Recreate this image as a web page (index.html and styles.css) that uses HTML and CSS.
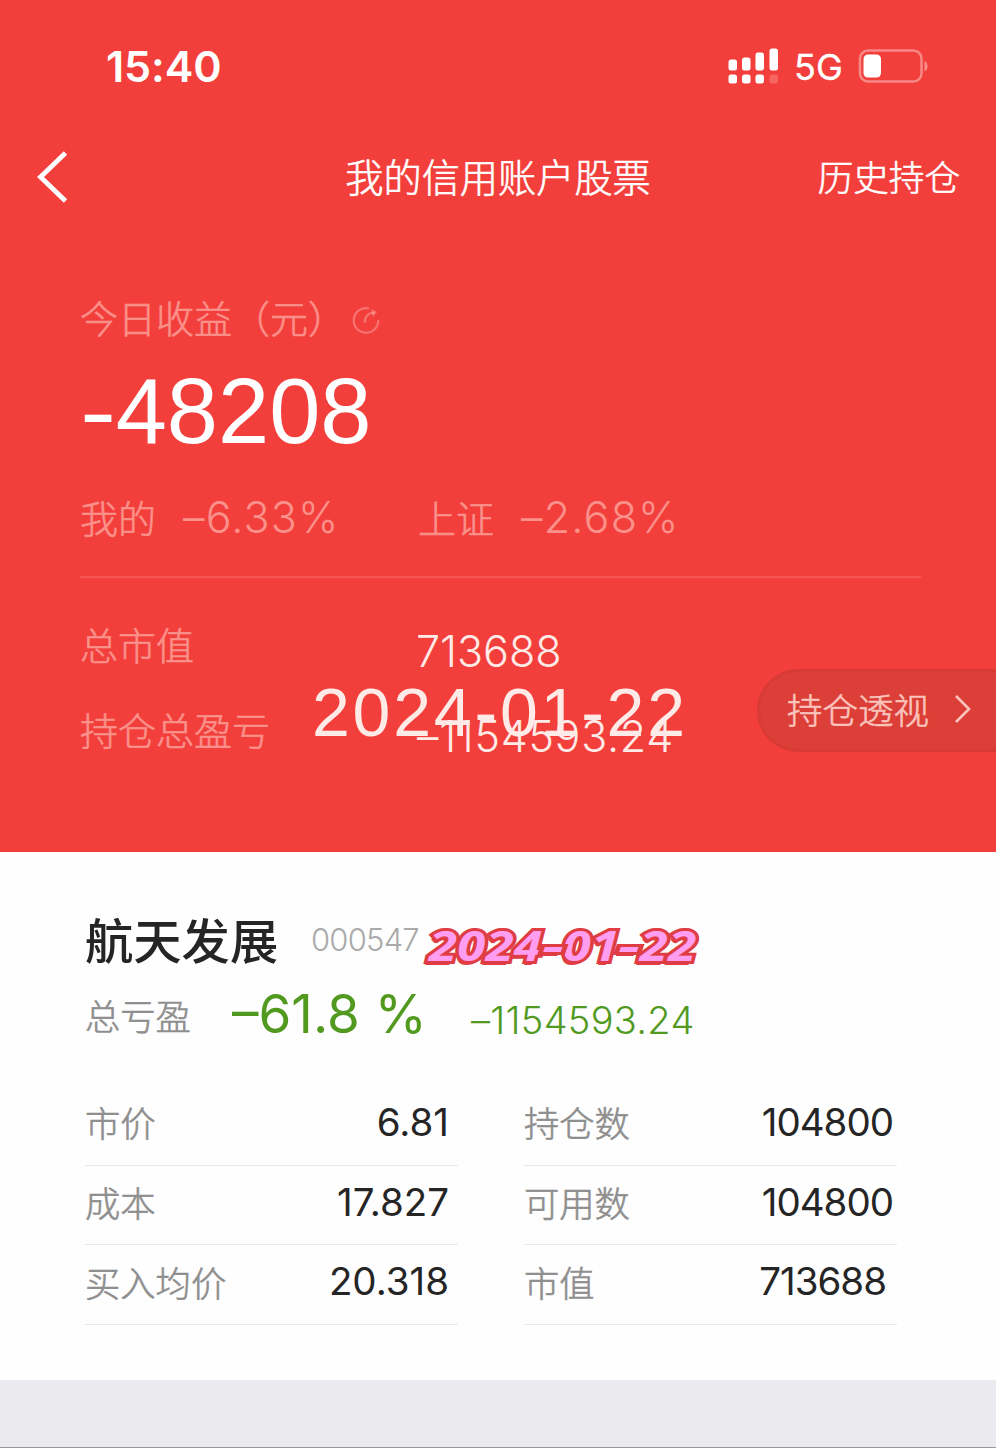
FILE: index.html
```
<!DOCTYPE html>
<html lang="zh-CN">
<head>
<meta charset="utf-8">
<title>我的信用账户股票</title>
<link rel="stylesheet" href="styles.css">
</head>
<body>
<header class="hero">
  <div class="status">
    <span class="clock">15:40</span>
    <div class="status-right">
      <svg class="signal" width="52" height="38" viewBox="0 0 52 38" fill="#fff">
        <rect x="1.500" y="11.500" width="8.500" height="11" rx="2.500"/><rect x="15" y="9.500" width="8.500" height="13" rx="2.500"/><rect x="28.500" y="4.500" width="8.500" height="18" rx="2.500"/><rect x="42.500" y="0.500" width="8.500" height="22" rx="2.500"/>
        <rect x="1.500" y="26.500" width="8.500" height="9" rx="2.500"/><rect x="15" y="26.500" width="8.500" height="9" rx="2.500"/><rect x="28.500" y="26.500" width="8.500" height="9" rx="2.500"/><rect x="42.500" y="26.500" width="8.500" height="9" rx="2.500" opacity=".2"/>
      </svg>
      <span class="net">5G</span>
      <svg class="battery" width="72" height="36" viewBox="0 0 72 36">
        <rect x="2" y="1.500" width="61.500" height="31" rx="8" fill="none" stroke="#fff" stroke-opacity=".38" stroke-width="2.500"/>
        <rect x="5.500" y="5.500" width="17.500" height="23" rx="4.500" fill="#fff"/>
        <path d="M66.500 12c4 1.500 4 9 0 10.500z" fill="#fff" opacity=".42"/>
      </svg>
    </div>
  </div>
  <nav class="nav">
    <svg class="back" width="34" height="54" viewBox="0 0 34 54"><path d="M30.500 3 5.500 27 30.500 51" fill="none" stroke="#fff" stroke-width="4.800"/></svg>
    <h1 class="title">我的信用账户股票</h1>
    <span class="history">历史持仓</span>
  </nav>
  <section class="today">
    <div class="today-label"><span>今日收益（元）</span>
      <svg class="refresh" width="30" height="30" viewBox="0 0 30 30" fill="none" stroke="#fff" stroke-opacity=".27" stroke-width="2.200"><path d="M18 3.500A12.300 12.300 0 1 0 27.300 15"/><path d="M14 18c-1-6 3-10 9-10.500"/><path d="m20 4 6 3-4 5z" fill="#fff" fill-opacity=".27" stroke="none"/></svg>
    </div>
    <div class="profit"><span class="sign">-</span>48208</div>
    <div class="rates">
      <span class="rate-name">我的</span><span class="rate mine">–6.33%</span>
      <span class="rate-name index">上证</span><span class="rate">–2.68%</span>
    </div>
  </section>
  <section class="totals">
    <div class="total"><span class="total-name">总市值</span><span class="total-value">713688</span></div>
    <div class="total"><span class="total-name">持仓总盈亏</span><span class="total-value loss">–1154593.24</span></div>
    <span class="stamp">2024-01-22</span>
    <div class="insight"><span>持仓透视</span><svg width="20" height="32" viewBox="0 0 20 32"><path d="M3 3 16 16 3 29" fill="none" stroke="#fbc3bd" stroke-width="2.600"/></svg></div>
  </section>
</header>
<main class="stock">
  <div class="stock-head"><h2 class="stock-name">航天发展</h2><span class="code">000547</span><span class="sticker">2024<i>-</i>01<i>-</i>22</span></div>
  <div class="stock-loss"><span class="loss-name">总亏盈</span><span class="loss-rate">–61.8 %</span><span class="loss-sum">–1154593.24</span></div>
  <div class="grid">
    <div class="cell"><span>市价</span><b>6.81</b></div><div class="cell"><span>持仓数</span><b>104800</b></div>
    <div class="cell"><span>成本</span><b>17.827</b></div><div class="cell"><span>可用数</span><b>104800</b></div>
    <div class="cell"><span>买入均价</span><b>20.318</b></div><div class="cell"><span>市值</span><b class="inset">713688</b></div>
  </div>
</main>
<footer class="foot"></footer>
</body>
</html>
```
FILE: styles.css
```
* { box-sizing: border-box; }
body {
  margin: 0; width: 996px; height: 1448px; overflow: hidden;
  display: flex; flex-direction: column; background: #fefefe;
  font-family: Inter, "Noto Sans CJK SC", sans-serif; font-weight: 300;
}
h1, h2 { margin: 0; font-weight: inherit; }
span, h1, h2, b { white-space: nowrap; }
svg { display: block; flex: none; }
.title, .history, .today-label span, .rate-name, .total-name, .insight span, .loss-name, .cell span { -webkit-text-stroke: .6px currentColor; }

.hero { height: 852px; background: #f33f3b; color: #fff; }
.status { height: 134px; padding: 0 66px 0 106px; display: flex; align-items: center; justify-content: space-between; }
.clock { padding-bottom: 2px; font-size: 43px; font-weight: 600; letter-spacing: -.1px; }
.status-right { display: flex; align-items: center; }
.net { width: 64px; margin-left: 15px; font-size: 36px; font-weight: 400; -webkit-text-stroke: .3px #fff; }

.nav { height: 86px; padding: 0 36px 0 35px; display: grid; grid-template-columns: 150px 1fr 150px; align-items: center; }
.title { text-align: center; font-size: 38.200px; line-height: 80px; padding: 2px 0 0 1px; }
.history { text-align: right; font-size: 35.600px; line-height: 80px; padding-top: 3px; }

.today { height: 358px; margin: 0 75px 0 80px; padding-top: 69px; border-bottom: 2px solid #f55550; }
.today-label { height: 60px; line-height: 61px; display: flex; font-size: 38px; color: #fa918b; }
.refresh { margin: 16px 0 0 5px; }
.profit { height: 126px; font: 400 92px/124px "Liberation Sans", sans-serif; }
.sign { display: inline-block; margin-right: 5px; transform: scaleX(1.180); transform-origin: left; }
.rates { height: 84px; display: flex; align-items: center; font-size: 43px; color: #fa918b; }
.rate-name { padding-bottom: 1px; font-size: 38px; }
.rate { margin-left: 27px; letter-spacing: 1.200px; }
.mine { width: 205px; }
.index { margin-left: 30px; }

.totals { position: relative; padding: 25px 0 0 80px; }
.total { height: 85px; display: flex; align-items: center; }
.total-name { width: 336px; padding-bottom: 4px; font-size: 38px; color: #fa918b; }
.total-value { padding-top: 10px; font-size: 43px; color: #feeae7; }
.loss { padding-left: 1px; letter-spacing: .700px; }
.stamp { position: absolute; left: 312px; top: 94px; font: 400 68px/80px "Liberation Sans", sans-serif; letter-spacing: 2.800px; color: #feeae7; }
.insight {
  position: absolute; right: -3px; top: 91px; width: 242px; height: 83px; padding: 0 0 3px 27px;
  display: flex; align-items: center; gap: 24px; border: 3px solid #d83a35; border-radius: 42px 0 0 42px;
  background: #db3f37; color: #fbc3bd; font-size: 35.500px;
}
.insight span { padding-bottom: 2px; }

.stock { height: 528px; padding: 50px 100px 0 85px; }
.stock-head { height: 80px; display: flex; align-items: center; }
.stock-name { width: 226px; font-size: 48.300px; font-weight: 500; color: #252525; padding-bottom: 8px; }
.code { width: 118px; padding-bottom: 5px; font-size: 31px; letter-spacing: -.8px; color: #aaa; }
.sticker {
  padding-top: 5px; font: italic 700 42px/60px "Open Sans", sans-serif; letter-spacing: .3px; color: #ff9df0;
  -webkit-text-stroke: 6px #df3d43; paint-order: stroke fill; text-shadow: -1px 1px 0 #df3d43, -1px 3px 0 #df3d43, -2px 4px 0 #df3d43;
  transform: scaleX(1.210); transform-origin: left;
}
.sticker i { display: inline-block; transform: scaleX(1.350); padding: 0 1.500px; }
.stock-loss { height: 66px; display: flex; align-items: center; color: #529a1f; }
.loss-name { width: 145px; padding-bottom: 2px; font-size: 35.300px; color: #8e8e8e; }
.loss-rate { width: 240px; padding: 0 0 2px 2px; font-size: 53px; font-weight: 400; }
.loss-sum { padding: 9px 0 0 1px; font-size: 38px; letter-spacing: .3px; }
.grid { margin-top: 38px; display: grid; grid-template-columns: 373px 373px; column-gap: 66px; }
.cell { height: 79.700px; padding: 0 9px 7px 0; display: flex; align-items: center; justify-content: space-between; border-bottom: 1.500px solid #e8e8e8; font-size: 35.300px; color: #8e8e8e; }
.cell:nth-child(even) { padding-right: 4px; }
.cell b { font-size: 38.500px; font-weight: 400; color: #252525; }
.cell:nth-child(even) b { letter-spacing: -1px; }
.cell .inset { padding-right: 7px; }
.foot { height: 68px; background: #eaeaef; border-bottom: 1px solid #999; }
```
